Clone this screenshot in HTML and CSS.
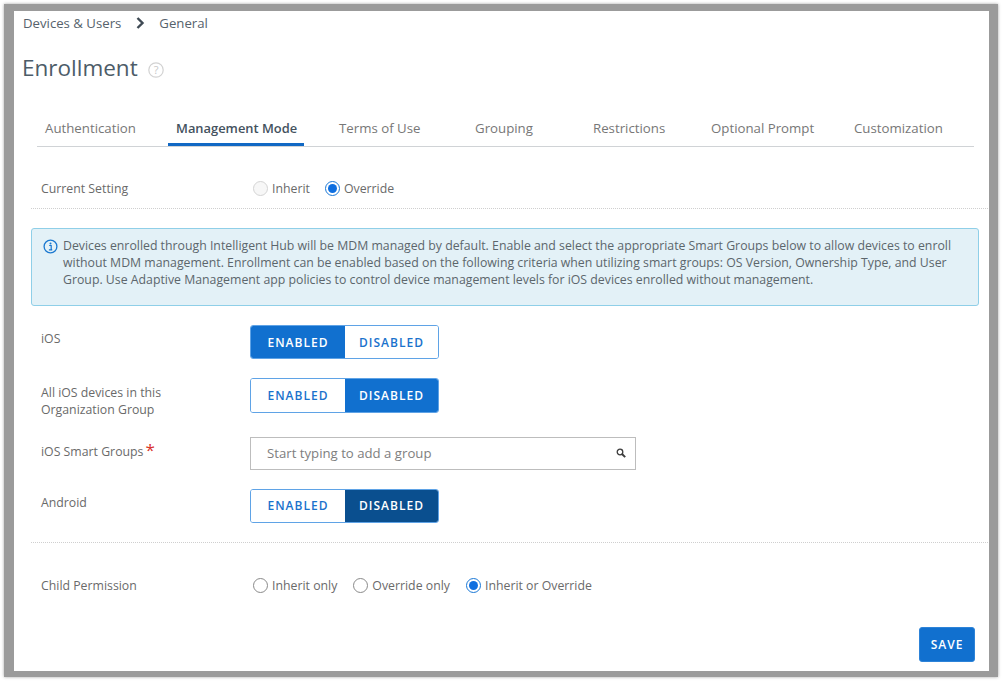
FILE: index.html
```html
<!DOCTYPE html>
<html lang="en">
<head>
<meta charset="utf-8">
<title>Enrollment</title>
<link rel="stylesheet" href="styles.css">
</head>
<body>
<main class="frame">
  <nav class="crumbs">
    <span>Devices &amp; Users</span>
    <svg class="crumb-sep" width="9" height="12" viewBox="0 0 9 12"><path d="M1.5 1 L6.5 6 L1.5 11" fill="none" stroke="#3f4a54" stroke-width="2.4"/></svg>
    <span>General</span>
  </nav>
  <header class="title-row">
    <h1>Enrollment</h1>
    <svg class="help" width="16" height="16" viewBox="0 0 16 16"><circle cx="8" cy="8" r="7.2" fill="none" stroke="#d2d2d2" stroke-width="1.2"/><text x="8" y="11.5" text-anchor="middle" class="help-q">?</text></svg>
  </header>
  <div class="tabs">
    <a class="tab">Authentication</a>
    <a class="tab active">Management Mode</a>
    <a class="tab">Terms of Use</a>
    <a class="tab">Grouping</a>
    <a class="tab">Restrictions</a>
    <a class="tab">Optional Prompt</a>
    <a class="tab">Customization</a>
  </div>
  <section class="row setting">
    <div class="label">Current Setting</div>
    <div class="radios">
      <label class="radio"><span class="dot off"></span>Inherit</label>
      <label class="radio"><span class="dot on"></span>Override</label>
    </div>
  </section>
  <hr class="rule">
  <div class="alert">
    <svg class="info" width="15" height="15" viewBox="0 0 15 15"><circle cx="7.5" cy="7.5" r="6.4" fill="none" stroke="#1a78d0" stroke-width="1.3"/><circle cx="7.5" cy="4.5" r="1" fill="#1a78d0"/><path d="M6.2 6.5 H8.2 V10.5 H9.2 M5.9 10.8 H9.2" fill="none" stroke="#1a78d0" stroke-width="1.2"/></svg>
    <p>Devices enrolled through Intelligent Hub will be MDM managed by default. Enable and select the appropriate Smart Groups below to allow devices to enroll without MDM management. Enrollment can be enabled based on the following criteria when utilizing smart groups: OS Version, Ownership Type, and User Group. Use Adaptive Management app policies to control device management levels for iOS devices enrolled without management.</p>
  </div>
  <section class="row ios">
    <div class="label">iOS</div>
    <div class="segment">
      <span class="seg sel">ENABLED</span><span class="seg">DISABLED</span>
    </div>
  </section>
  <section class="row all">
    <div class="label">All iOS devices in this<br>Organization Group</div>
    <div class="segment">
      <span class="seg">ENABLED</span><span class="seg sel">DISABLED</span>
    </div>
  </section>
  <section class="row groups">
    <div class="label">iOS Smart Groups<span class="req">*</span></div>
    <div class="search">
      <span class="placeholder">Start typing to add a group</span>
      <svg width="10" height="10" viewBox="0 0 10 10"><circle cx="4" cy="4" r="2.8" fill="none" stroke="#3c3c3c" stroke-width="1.3"/><path d="M6 6 L9.2 9.2" stroke="#3c3c3c" stroke-width="1.9"/></svg>
    </div>
  </section>
  <section class="row android">
    <div class="label">Android</div>
    <div class="segment">
      <span class="seg">ENABLED</span><span class="seg sel dark">DISABLED</span>
    </div>
  </section>
  <hr class="rule lower">
  <section class="row child">
    <div class="label">Child Permission</div>
    <div class="radios">
      <label class="radio"><span class="dot"></span>Inherit only</label>
      <label class="radio"><span class="dot"></span>Override only</label>
      <label class="radio"><span class="dot on"></span>Inherit or Override</label>
    </div>
  </section>
  <div class="actions"><button class="save">SAVE</button></div>
</main>
</body>
</html>
```
FILE: styles.css
```css
* { box-sizing: border-box; }
html, body { margin: 0; padding: 0; background: #fff; }
body { width: 1003px; height: 682px; overflow: hidden; padding: 4px 0 0 4px; font-family: "Open Sans", "Liberation Sans", sans-serif; font-size: 12.3px; color: #6a6a6a; }
.frame { width: 994px; height: 673px; background: #fff; border: solid #9b9b9b; border-width: 7px 9px 6px 10px; box-shadow: 0 0 3px rgba(0,0,0,.35); padding: 0 0 0 17px; }
.crumbs { display: flex; align-items: center; height: 24px; margin-left: -8px; font-size: 13.2px; color: #56626c; }
.crumb-sep { margin: 0 14px 0 15px; }
.title-row { display: flex; align-items: center; height: 44px; margin: 11px 0 0 -9px; }
h1 { margin: 0; font-size: 22.5px; font-weight: 400; color: #4d5c68; line-height: 44px; }
.help { margin-left: 10px; margin-top: 3px; }
.help-q { font-family: "Open Sans", sans-serif; font-size: 11px; fill: #c8c8c8; }
.tabs { display: grid; grid-template-columns: 131px 163px 136px 118px 118px 143px 128px; width: 937px; margin: 26px 0 0 6px; height: 31px; border-bottom: 1px solid #d0d3d6; font-size: 13.25px; }
.tab { justify-self: start; padding: 0 8px; height: 30px; line-height: 24px; color: #777; white-space: nowrap; }
.tab.active { color: #44525e; font-size: 12.9px; font-weight: 600; border-bottom: 3px solid #1168c4; width: 136px; }
.row { display: flex; }
.label { width: 219px; flex: none; padding-left: 10px; line-height: 17px; }
.setting { height: 61px; padding-top: 22px; align-items: center; }
.radios { display: flex; gap: 15px; margin-left: 3px; }
.radio { display: flex; align-items: center; gap: 4px; line-height: 17px; }
.dot { width: 15px; height: 15px; border-radius: 50%; border: 1px solid #8a8a8a; background: #fff; flex: none; position: relative; }
.dot.off { border-color: #d4d4d4; background: #f7f7f7; }
.dot.on { border-color: #1a78d6; }
.dot.on::after { content: ""; position: absolute; left: 2px; top: 2px; width: 9px; height: 9px; border-radius: 50%; background: #0f6fe0; }
.rule { margin: 0; border: 0; border-top: 1px dotted #cfcfcf; width: 957px; }
.alert { display: flex; gap: 5px; width: 948px; height: 78px; margin: 19px 0 0 0; padding: 8px 10px 0 11px; background: #e3f1f7; border: 1px solid #8fcfe8; border-radius: 3px; line-height: 17px; color: #5c666c; }
.alert p { margin: 0; }
.info { flex: none; margin-top: 2px; }
.ios { margin-top: 19px; height: 34px; }
.ios .label { padding-top: 5px; }
.ios .seg { padding-bottom: 0; }
.segment { display: flex; width: 189px; height: 34px; border: 1px solid #5fa3e6; border-radius: 3px; overflow: hidden; font-size: 12px; font-weight: 600; letter-spacing: 1px; }
.seg { display: flex; align-items: center; justify-content: center; padding-bottom: 1px; color: #1a72cc; background: #fff; width: 94px; }
.seg + .seg { width: 93px; }
.seg.sel { background: #1170cf; color: #fff; }
.seg.dark { background: #0a4f8f; }
.all { margin-top: 19px; height: 35px; }
.all .segment { height: 35px; }
.all .label { padding-top: 6px; }
.groups { margin-top: 24px; height: 33px; }
.groups .label { padding-top: 6px; }
.req { color: #d9322a; font-size: 17px; line-height: 12px; margin-left: 2px; }
.search { display: flex; align-items: center; justify-content: space-between; width: 386px; height: 33px; border: 1px solid #bdbdbd; padding: 0 9px 1px 16px; font-size: 13.2px; color: #7e7e7e; }
.android { margin-top: 19px; height: 34px; }
.android .label { padding-top: 5px; }
.lower { margin-top: 19px; }
.child { margin-top: 34px; height: 17px; align-items: center; }
.child .radios { gap: 16px; }
.actions { display: flex; justify-content: flex-end; padding-right: 14px; margin-top: 33px; }
.save { width: 56px; height: 35px; border: 1px solid #2d83d8; border-radius: 3px; background: #1170cf; color: #fff; font-family: inherit; font-size: 12px; font-weight: 600; letter-spacing: 1px; padding: 0; }
```
